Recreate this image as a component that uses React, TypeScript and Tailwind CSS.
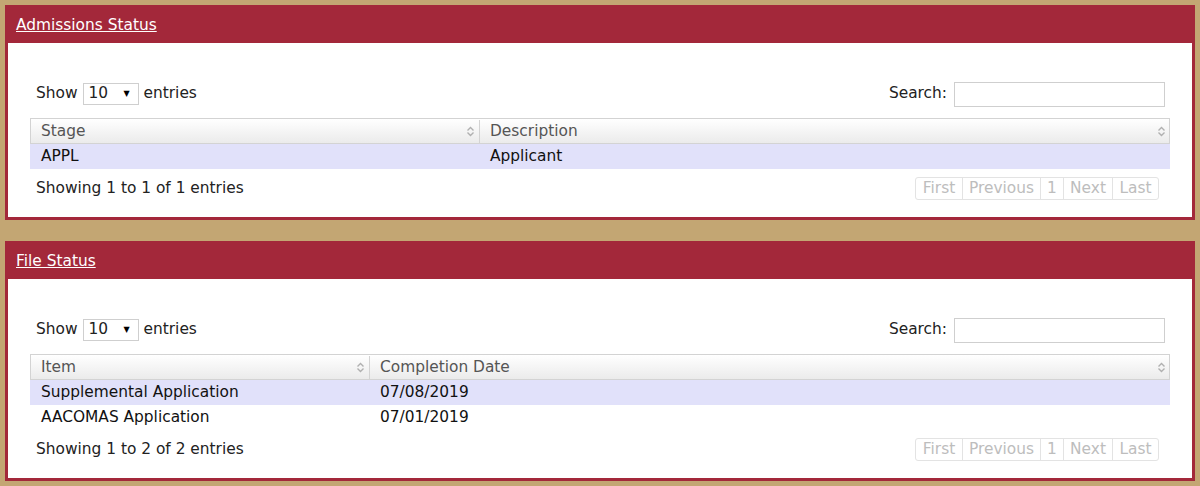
import React from "react";

const SortIcon = () => (
  <svg width="9" height="13" viewBox="0 0 9 13" className="shrink-0">
    <path d="M1.5 5.5 L4.5 2.5 L7.5 5.5" fill="none" stroke="#b0b0b0" strokeWidth="1.4" />
    <path d="M1.5 7.5 L4.5 10.5 L7.5 7.5" fill="none" stroke="#b0b0b0" strokeWidth="1.4" />
  </svg>
);

type Props = {
  title: string;
  cols: [string, string];
  firstWidth: string;
  rows: [string, string][];
  info: string;
};

function Panel({ title, cols, firstWidth, rows, info }: Props) {
  return (
    <div className="border-[3px] border-[#a3283a] bg-white">
      <div className="h-[35px] bg-[#a3283a] pl-[8px] pt-[1px] flex items-center">
        <span className="text-white underline text-[15.4px] leading-none">{title}</span>
      </div>
      <div className="px-[22px] pt-[38px] pb-[17px]">
        <div className="flex items-center justify-between h-[25px] pl-[6px] pr-[5px] text-[#222] pt-[1px]">
          <div className="flex items-center">
            <span>Show</span>
            <div className="ml-[5px] mr-[5px] w-[56px] h-[22px] border border-[#cfcfcf] flex items-center justify-between pl-[5px] pr-[8px]">
              <span>10</span>
              <span className="text-[8px] text-black">▼</span>
            </div>
            <span>entries</span>
          </div>
          <div className="flex items-center">
            <span>Search:</span>
            <div className="ml-[7px] w-[211px] h-[25px] border border-[#cfcfcf] bg-white" />
          </div>
        </div>
        <div className="mt-[12px]">
          <div className="flex h-[26px] border border-[#d3d3d3] bg-gradient-to-b from-white to-[#ebebeb] text-[#555] pt-[1px]">
            <div className={`${firstWidth} flex items-center justify-between pl-[10px] pr-[4px] border-r border-[#d3d3d3]`}>
              <span>{cols[0]}</span>
              <SortIcon />
            </div>
            <div className="flex-1 flex items-center justify-between pl-[10px] pr-[3px]">
              <span>{cols[1]}</span>
              <SortIcon />
            </div>
          </div>
          {rows.map((r, i) => (
            <div
              key={i}
              className={`flex h-[25px] items-center text-[#111] pt-[1px] ${i % 2 === 0 ? "bg-[#e1e1fa]" : "bg-white"}`}
            >
              <div className={`${firstWidth} pl-[11px]`}>{r[0]}</div>
              <div className="flex-1 pl-[11px]">{r[1]}</div>
            </div>
          ))}
        </div>
        <div className="mt-[8px] flex items-center justify-between h-[23px] pl-[6px] pr-[11px]">
          <span className="text-[#222] pt-[1px]">{info}</span>
          <div className="flex h-[23px] border border-[#e3e3e3] rounded-[3px] text-[#bdbdbd]">
            <div className="w-[47px] flex items-center justify-center border-r border-[#e3e3e3]">First</div>
            <div className="w-[78px] flex items-center justify-center border-r border-[#e3e3e3]">Previous</div>
            <div className="w-[23px] flex items-center justify-center border-r border-[#e3e3e3]">1</div>
            <div className="w-[49px] flex items-center justify-center border-r border-[#e3e3e3]">Next</div>
            <div className="w-[45px] flex items-center justify-center">Last</div>
          </div>
        </div>
      </div>
    </div>
  );
}

export default function App() {
  return (
    <div
      className="w-[1200px] h-[486px] bg-[#c3a673] px-[5px] pt-[5px] flex flex-col gap-[21px] text-[15.4px]"
      style={{ fontFamily: '"DejaVu Sans", Verdana, sans-serif' }}
    >
      <Panel
        title="Admissions Status"
        cols={["Stage", "Description"]}
        firstWidth="w-[449px]"
        rows={[["APPL", "Applicant"]]}
        info="Showing 1 to 1 of 1 entries"
      />
      <Panel
        title="File Status"
        cols={["Item", "Completion Date"]}
        firstWidth="w-[339px]"
        rows={[
          ["Supplemental Application", "07/08/2019"],
          ["AACOMAS Application", "07/01/2019"],
        ]}
        info="Showing 1 to 2 of 2 entries"
      />
    </div>
  );
}
